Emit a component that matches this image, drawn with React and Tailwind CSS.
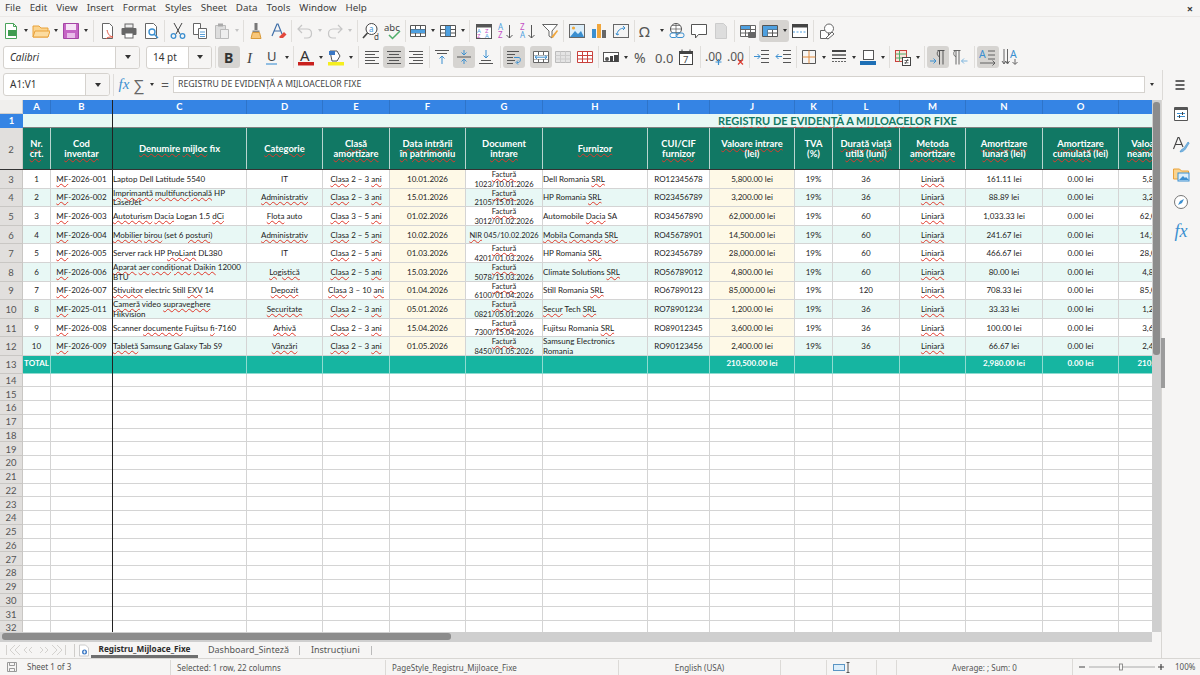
import { Fragment } from "react";

// *word* in a string = red spellcheck squiggle
const Spell = ({ text }) => {
  const parts = text.split("*");
  return (
    <>
      {parts.map((p, i) =>
        i % 2 ? (
          <span key={i} className="underline decoration-wavy decoration-[#e0392b] decoration-[0.5px] underline-offset-[0.5px]">
            {p}
          </span>
        ) : (
          <Fragment key={i}>{p}</Fragment>
        )
      )}
    </>
  );
};

const rows = [
  ["1", "*MF*-2026-001", "Laptop Dell Latitude 5540", "IT", "*Clasa* 2 – 3 *ani*", "10.01.2026", "*Factură* 1023/10.01.2026", "Dell Romania *SRL*", "RO12345678", "5,800.00 lei", "19%", "36", "161.11 lei"],
  ["2", "*MF*-2026-002", "*Imprimantă* *multifuncțională* HP *LaserJet*", "*Administrativ*", "*Clasa* 2 – 3 *ani*", "15.01.2026", "*Factură* 2105/15.01.2026", "HP Romania *SRL*", "RO23456789", "3,200.00 lei", "19%", "36", "88.89 lei"],
  ["3", "*MF*-2026-003", "*Autoturism* *Dacia* Logan 1.5 *dCi*", "*Flota* auto", "*Clasa* 3 – 5 *ani*", "01.02.2026", "*Factură* 3012/01.02.2026", "Automobile *Dacia* SA", "RO34567890", "62,000.00 lei", "19%", "60", "1,033.33 lei"],
  ["4", "*MF*-2026-004", "*Mobilier* *birou* (set 6 *posturi*)", "*Administrativ*", "*Clasa* 2 – 5 *ani*", "10.02.2026", "*NIR* 045/10.02.2026", "*Mobila* *Comanda* *SRL*", "RO45678901", "14,500.00 lei", "19%", "60", "241.67 lei"],
  ["5", "*MF*-2026-005", "Server rack HP *ProLiant* DL380", "IT", "*Clasa* 2 – 5 *ani*", "01.03.2026", "*Factură* 4201/01.03.2026", "HP Romania *SRL*", "RO23456789", "28,000.00 lei", "19%", "60", "466.67 lei"],
  ["6", "*MF*-2026-006", "*Aparat* *aer* *condiționat* *Daikin* 12000 BTU", "*Logistică*", "*Clasa* 2 – 5 *ani*", "15.03.2026", "*Factură* 5078/15.03.2026", "Climate Solutions *SRL*", "RO56789012", "4,800.00 lei", "19%", "60", "80.00 lei"],
  ["7", "*MF*-2026-007", "*Stivuitor* electric Still *EXV* 14", "*Depozit*", "*Clasa* 3 – 10 *ani*", "01.04.2026", "*Factură* 6100/01.04.2026", "Still Romania *SRL*", "RO67890123", "85,000.00 lei", "19%", "120", "708.33 lei"],
  ["8", "*MF*-2025-011", "*Cameră* video *supraveghere* *Hikvision*", "*Securitate*", "*Clasa* 2 – 3 *ani*", "05.01.2026", "*Factură* 0821/05.01.2026", "*Secur* Tech *SRL*", "RO78901234", "1,200.00 lei", "19%", "36", "33.33 lei"],
  ["9", "*MF*-2026-008", "Scanner *documente* Fujitsu *fi*-7160", "*Arhivă*", "*Clasa* 2 – 3 *ani*", "15.04.2026", "*Factură* 7300/15.04.2026", "Fujitsu Romania *SRL*", "RO89012345", "3,600.00 lei", "19%", "36", "100.00 lei"],
  ["10", "*MF*-2026-009", "*Tabletă* Samsung Galaxy Tab S9", "*Vânzări*", "*Clasa* 2 – 3 *ani*", "01.05.2026", "*Factură* 8450/01.05.2026", "Samsung Electronics Romania", "RO90123456", "2,400.00 lei", "19%", "36", "66.67 lei"],
];

const headers = [
  ["*Nr*.", "*crt*."], ["Cod", "*inventar*"], ["*Denumire* *mijloc* fix"], ["*Categorie*"], ["*Clasă*", "*amortizare*"],
  ["*Data* *intrării*", "*în* *patrimoniu*"], ["Document", "*intrare*"], ["*Furnizor*"], ["CUI/CIF", "*furnizor*"],
  ["*Valoare* *intrare*", "(lei)"], ["TVA", "(%)"], ["*Durată* *viață*", "*utilă* (*luni*)"], ["*Metoda*", "*amortizare*"],
  ["*Amortizare*", "*lunară* (lei)"], ["*Amortizare*", "*cumulată* (lei)"], ["*Valoare* *rămasă*", "*neamortizată* (lei)"],
];

const letters = ["A", "B", "C", "D", "E", "F", "G", "H", "I", "J", "K", "L", "M", "N", "O", "P"];

const I = ({ children }) => (
  <svg width="18" height="18" viewBox="0 0 18 18" fill="none" strokeWidth="1">
    {children}
  </svg>
);

const Lines = ({ items, color = "#555" }) => (
  <>
    {items.map(([a, b, y]) => (
      <path key={y} d={`M${a} ${y}H${b}`} stroke={color} />
    ))}
  </>
);

const Grid = ({ stroke = "#555", fill = "#fff" }) => (
  <path d="M1.5 3.5h15v11h-15zM1.5 7.5h15M1.5 11h15M6.5 3.5v11M11.5 3.5v11" stroke={stroke} fill={fill} />
);

const icons = {
  new: <I><path d="M3.5 1.5h8l3 3v12h-11z" fill="#fff" stroke="#4aa35a" /><rect x="6" y="8" width="8" height="6" fill="#3f9c50" /><path d="M11.5 1.5v3h3" stroke="#4aa35a" /></I>,
  open: <I><path d="M1 15V4h6l2 2h7v9z" fill="#fbd48e" stroke="#e9a23b" /><path d="M1 15l2-6h15l-2 6z" fill="#fcdca0" stroke="#e9a23b" /></I>,
  save: <I><path d="M1.5 1.5h15v15h-15z" fill="#c565c5" stroke="#a444a4" /><rect x="4" y="2" width="10" height="6" fill="#f6e3f6" /><rect x="5" y="11" width="8" height="5" fill="#e9bce9" /></I>,
  pdf: <I><path d="M4.5 1.5h7l3 3v12h-10z" fill="#fff" stroke="#666" /><path d="M9 8c1 4 2 6 6 7-3 0-6 0-7 2" stroke="#e0533f" /></I>,
  print: <I><rect x="5" y="2" width="8" height="4" fill="#eee" stroke="#666" /><rect x="1.5" y="6" width="15" height="7" rx="1" fill="#666" /><rect x="5" y="11" width="8" height="5" fill="#fff" stroke="#666" /></I>,
  preview: <I><path d="M3.5 1.5h8l3 3v12h-11z" fill="#fff" stroke="#666" /><circle cx="10" cy="10" r="3" stroke="#3b8fd0" strokeWidth="1.4" /><path d="M12 12l4 4" stroke="#3b8fd0" strokeWidth="1.5" /></I>,
  cut: <I><path d="M5 1l6 11M13 1L7 12" stroke="#444" /><circle cx="4.5" cy="14" r="2.3" stroke="#3b8fd0" strokeWidth="1.3" /><circle cx="13.5" cy="14" r="2.3" stroke="#3b8fd0" strokeWidth="1.3" /></I>,
  copy: <I><path d="M2.5 1.5h7v11h-7z" fill="#fff" stroke="#666" /><path d="M7.5 6.5h8v10h-8z" fill="#fff" stroke="#666" /><Lines items={[[9, 14, 10], [9, 14, 12.5], [9, 14, 14.5]]} color="#5aa0d8" /></I>,
  paste: <I><path d="M2.5 3.5h10v13h-10z" fill="#ddd" stroke="#bbb" /><path d="M7.5 7.5h8v9h-8z" fill="#eee" stroke="#bbb" /><rect x="5" y="1.5" width="5" height="3" fill="#aaa" /></I>,
  clone: <I><rect x="7.5" y="1" width="3" height="7" fill="#777" /><path d="M5.5 8.5h7v2h-7z" fill="#888" /><path d="M4 16.5l1.5-6h7l1.5 6z" fill="#f8c77a" stroke="#d99a3a" /></I>,
  clear: <I><path d="M3 14L8 2h1l4 10M5 9h6" stroke="#3f6fa8" strokeWidth="1.2" /><path d="M10 15l5-5 2.5 2.5-3.5 3.5h-3z" fill="#e2483d" /></I>,
  undo: <I><path d="M6 3L2 7l4 4M2 7h9c6 0 6 9 0 9H8" stroke="#c6c6c6" strokeWidth="1.2" /></I>,
  redo: <I><path d="M12 3l4 4-4 4M16 7H7c-6 0-6 9 0 9h3" stroke="#c6c6c6" strokeWidth="1.2" /></I>,
  find: <I><circle cx="9.5" cy="7" r="5.5" fill="#fff" stroke="#444" /><path d="M5.5 11L1 16" stroke="#444" strokeWidth="1.6" /><text x="7" y="9.5" fontSize="8" fill="#3b8fd0">a</text><text x="12" y="17.5" fontSize="8" fill="#444">d</text></I>,
  spell: <I><text x="0" y="9" fontSize="9.5" fill="#444">abc</text><path d="M5 13l3.5 3.5L16 9" stroke="#4fae6a" strokeWidth="1.5" /></I>,
  row: <I><Grid stroke="#555" fill="#fff" /><rect x="2" y="7.5" width="14" height="3.5" fill="#4ea0e0" /></I>,
  col: <I><Grid stroke="#555" fill="#fff" /><rect x="6.5" y="4" width="5" height="10" fill="#4ea0e0" /></I>,
  sort: <I><rect x="1.5" y="2.5" width="15" height="14" fill="#fff" stroke="#555" /><rect x="1.5" y="2.5" width="15" height="3" fill="#555" /><text x="2" y="11" fontSize="6" fill="#4ea0e0">A</text><text x="2" y="16" fontSize="6" fill="#c44fc4">Z</text><text x="10" y="11" fontSize="6" fill="#c44fc4">Z</text><text x="10" y="16" fontSize="6" fill="#4ea0e0">A</text></I>,
  asc: <I><text x="1" y="8" fontSize="8" fill="#4ea0e0">A</text><text x="1" y="16" fontSize="8" fill="#c44fc4">Z</text><path d="M12.5 3v13M9.5 13l3 3 3-3" stroke="#555" /></I>,
  desc: <I><text x="1" y="8" fontSize="8" fill="#c44fc4">Z</text><text x="1" y="16" fontSize="8" fill="#4ea0e0">A</text><path d="M12.5 3v13M9.5 13l3 3 3-3" stroke="#555" /></I>,
  filter: <I><path d="M1.5 2.5h15L11 9v7l-3-2V9z" fill="#fff" stroke="#666" /><path d="M10 15l6-7 1 1-5 7z" fill="#f0a63c" /></I>,
  image: <I><rect x="1.5" y="2.5" width="15" height="13" fill="#dceefa" stroke="#666" /><circle cx="5.5" cy="6" r="1.6" fill="#f2a93b" /><path d="M2 15l5-6 3 3 3-3 3 6z" fill="#3b8fd0" /></I>,
  chart: <I><rect x="2" y="7" width="4" height="9" fill="#3b8fd0" /><rect x="7" y="2" width="4" height="14" fill="#f0a63c" /><rect x="12" y="8" width="4" height="8" fill="#666" /></I>,
  pivot: <I><rect x="1.5" y="2.5" width="15" height="13" fill="#f4f4f4" stroke="#666" /><path d="M5 13c0-4 3-7 8-7M11 4l2 2-2 2M4 11l1 2 2-1" stroke="#3b8fd0" /></I>,
  omega: <I><text x="1" y="15" fontSize="15" fill="#555">Ω</text></I>,
  link: <I><circle cx="8" cy="7" r="5.5" fill="#fff" stroke="#555" /><path d="M2.5 7h11M8 1.5v11M4 3.5h8M4 10.5h8" stroke="#555" strokeWidth="0.7" /><rect x="2" y="11" width="7" height="4.5" rx="2" stroke="#3b8fd0" fill="#fff" /><rect x="8" y="11" width="8" height="4.5" rx="2" stroke="#3b8fd0" /></I>,
  comment: <I><path d="M1.5 2.5h15v10h-8l-3 3.5v-3.5h-4z" fill="#fff" stroke="#555" /></I>,
  note: <I><path d="M3.5 1.5h8l3 3v12h-11z" fill="#ddd" stroke="#ccc" /></I>,
  printrange: <I><Grid stroke="#666" /><rect x="2" y="4" width="9" height="3" fill="#4ea0e0" /><rect x="9" y="10" width="8" height="6" rx="1" fill="#666" /></I>,
  freeze: <I><Grid stroke="#555" /><rect x="2" y="4" width="14" height="3.5" fill="#4ea0e0" /><rect x="2" y="4" width="4.5" height="10" fill="#4ea0e0" /></I>,
  split: <I><rect x="1.5" y="2.5" width="15" height="13" fill="#fff" stroke="#444" /><rect x="1.5" y="2.5" width="15" height="3" fill="#444" /><path d="M2 10h14" stroke="#4ea0e0" strokeDasharray="2 1.5" /></I>,
  shapes: <I><path d="M2.5 8.5h8v8h-8z" fill="#fff" stroke="#666" /><circle cx="11" cy="6.5" r="4.5" fill="#fff" stroke="#666" /><path d="M8 16l6-6 2 2-6 5z" fill="#fff" stroke="#666" /></I>,
  bold: <svg width="18" height="18" viewBox="0 0 18 18"><text x="4" y="15" fontSize="14" fontWeight="700" fill="#333">B</text></svg>,
  italic: <svg width="18" height="18" viewBox="0 0 18 18"><text x="5" y="15" fontSize="15" fontStyle="italic" fontFamily="Liberation Serif" fill="#444">I</text></svg>,
  under: <I><text x="4" y="13" fontSize="13" fill="#444">U</text><path d="M3 16h11" stroke="#5aa0d8" strokeWidth="1.3" /></I>,
  color: <I><text x="3" y="12.5" fontSize="15" fill="#333">A</text><rect x="1" y="14" width="16" height="3.5" fill="#c9211e" /></I>,
  bg: <I><path d="M3 3h7l3 5-3 5H5z" fill="#fff" stroke="#555" /><path d="M2 3h6v4H2z" fill="#3b78c4" /><rect x="1" y="14" width="16" height="3.5" fill="#f5ee1f" /></I>,
  left: <I><Lines items={[[2, 16, 3.5], [2, 12, 6.5], [2, 16, 9.5], [2, 12, 12.5], [2, 16, 15.5]]} /></I>,
  center: <I><Lines items={[[2, 16, 3.5], [4, 14, 6.5], [2, 16, 9.5], [4, 14, 12.5], [2, 16, 15.5]]} /></I>,
  right: <I><Lines items={[[2, 16, 3.5], [6, 16, 6.5], [2, 16, 9.5], [6, 16, 12.5], [2, 16, 15.5]]} /></I>,
  top: <I><Lines items={[[2, 16, 2.5], [4, 14, 5.5]]} /><path d="M9 16V8M6.5 10.5L9 8l2.5 2.5" stroke="#3b8fd0" /></I>,
  middle: <I><Lines items={[[2, 16, 9]]} /><path d="M9 2v5M6.5 4.5L9 7l2.5-2.5M9 16v-5M6.5 13.5L9 11l2.5 2.5" stroke="#3b8fd0" /></I>,
  bottom: <I><Lines items={[[4, 14, 12.5], [2, 16, 15.5]]} /><path d="M9 2v8M6.5 7.5L9 10l2.5-2.5" stroke="#3b8fd0" /></I>,
  wrap: <I><Lines items={[[2, 14, 3.5], [2, 10, 6.5], [2, 8, 9.5], [2, 10, 12.5], [2, 8, 15.5]]} /><path d="M9 9.5h5c2 0 2 5-1 5h-1M13 12.5l-2 2 2 2" stroke="#3b8fd0" /></I>,
  merge: <I><Grid stroke="#666" /><rect x="2" y="7.5" width="14" height="3.5" fill="#fff" /><path d="M3 9.2h12M5 7.5L3 9.2 5 11M13 7.5l2 1.7-2 1.7" stroke="#3b8fd0" /></I>,
  merge2: <I><path d="M1.5 3.5h15v11h-15z" fill="#e4e4e4" stroke="#bbb" /><path d="M1.5 7.5h15M1.5 11h15M6.5 3.5v11M11.5 3.5v11" stroke="#ccc" /></I>,
  unmerge: <I><Grid stroke="#c9413c" /></I>,
  number: <I><rect x="1.5" y="4.5" width="15" height="9" fill="#fff" stroke="#555" /><rect x="8" y="8" width="3" height="6" fill="#444" /><rect x="12" y="7" width="4" height="7" fill="#444" /><circle cx="5" cy="11" r="2" fill="#555" /></I>,
  percent: <svg width="18" height="18" viewBox="0 0 18 18"><text x="1" y="15" fontSize="14" fill="#555">%</text></svg>,
  zero: <svg width="18" height="18" viewBox="0 0 18 18"><text x="0" y="14.5" fontSize="13" fill="#555">0.0</text></svg>,
  date: <I><rect x="2.5" y="3.5" width="13" height="13" fill="#fff" stroke="#444" /><path d="M2.5 5h13" stroke="#444" strokeWidth="2" /><path d="M5 1.5v3M13 1.5v3" stroke="#444" /><text x="6" y="15" fontSize="9.5" fill="#444">7</text></I>,
  addDec: <I><text x="0" y="13" fontSize="12" fill="#555">.00</text><path d="M13.5 11v6M10.5 14h6" stroke="#3b8fd0" strokeWidth="1.2" /></I>,
  delDec: <I><text x="0" y="13" fontSize="12" fill="#555">.00</text><path d="M11 11.5l5 5M16 11.5l-5 5" stroke="#dd3b30" strokeWidth="1.2" /></I>,
  indent: <I><Lines items={[[8, 16, 2.5], [8, 16, 6.5], [8, 16, 10.5], [8, 16, 14.5]]} /><path d="M1 8.5h6M4.5 6l2.5 2.5L4.5 11" stroke="#3b8fd0" /></I>,
  outdent: <I><Lines items={[[8, 16, 2.5], [8, 16, 6.5], [8, 16, 10.5], [8, 16, 14.5]]} /><path d="M7 8.5H1M3.5 6L1 8.5 3.5 11" stroke="#3b8fd0" /></I>,
  borders: <I><path d="M2.5 2.5h13v13h-13z" stroke="#555" /><path d="M9 2.5v13M2.5 9h13" stroke="#e08a3c" /></I>,
  lineStyle: <I><path d="M2 3h14" stroke="#444" strokeWidth="2" /><path d="M2 7h14" stroke="#444" strokeWidth="1.4" /><path d="M2 10.5h14" stroke="#444" /><path d="M2 13.5h14" stroke="#666" strokeDasharray="2 1" /></I>,
  borderColor: <I><rect x="4.5" y="2.5" width="10" height="9" fill="#fff" stroke="#555" /><rect x="1" y="13" width="16" height="4" fill="#1e6fb5" /></I>,
  cond: <I><rect x="1.5" y="2.5" width="11" height="11" fill="#fbe3dc" stroke="#c9413c" /><path d="M1.5 6h11M1.5 10h11M5.5 2.5v11" stroke="#4fae6a" /><rect x="8.5" y="9.5" width="8" height="8" fill="#fff" stroke="#444" /><path d="M10.5 12.5h4M10.5 14.8h4M14 11l-3 5" stroke="#444" strokeWidth="0.8" /></I>,
  ltr: <I><path d="M8.5 2.5h7M10.5 2.5v14M14 2.5v14M10.5 2.5c-3 0-3 6 0 6" stroke="#555" /><path d="M1 13h6M4.5 10.5L7 13l-2.5 2.5" stroke="#3b8fd0" /></I>,
  rtl: <I><path d="M2.5 2.5h7M5 2.5v14M8 2.5v14M5 2.5c-3 0-3 6 0 6" stroke="#666" /><path d="M16.5 13h-6M13 10.5L10.5 13l2.5 2.5" stroke="#7fb6de" /></I>,
  textLtr: <I><text x="0" y="10" fontSize="10.5" fill="#3b8fd0">A</text><path d="M9 3h7M9 7h7M9 11h7M1 15h15M13.5 12.5L16 15l-2.5 2.5" stroke="#555" strokeWidth="0.9" /></I>,
  textTtb: <I><text x="9" y="10" fontSize="10.5" fill="#3b8fd0">A</text><path d="M3 1v14M6.5 1v14M1 13l2 3 2-3M4.5 13l2 3 2-3M14 11v5M11.5 14l2.5 2.5L16.5 14" stroke="#555" strokeWidth="0.9" /></I>,
};

const Btn = ({ icon, active, className = "" }) => (
  <div className={`w-[22px] h-[22px] shrink-0 flex items-center justify-center rounded-[3px] ${active ? "bg-[#d6d4d1]" : ""} ${className}`}>
    {icons[icon]}
  </div>
);

const Arrow = ({ light }) => (
  <div className="w-[8px] h-[22px] shrink-0 flex items-center justify-center">
    <div className={`w-0 h-0 border-l-[2.5px] border-r-[2.5px] border-t-[3px] border-l-transparent border-r-transparent ${light ? "border-t-[#c4c4c4]" : "border-t-[#333]"}`} />
  </div>
);

const Sep = ({ className }) => (
  <div className={`h-[22px] shrink-0 flex justify-center ${className}`}>
    <div className="w-px h-full bg-[#e0dedb]" />
  </div>
);

const Combo = ({ text, italic, className, split }) => (
  <div className={`h-[23px] shrink-0 flex rounded-[3px] border border-[#d5d2ce] bg-white overflow-hidden ${className}`}>
    <div className={`flex-1 pl-[6px] text-[10px] leading-[21px] text-[#333] ${italic ? "italic" : ""}`}>{text}</div>
    <div className={`${split} bg-[#f6f5f4] border-l border-[#d5d2ce] flex items-center justify-center`}>
      <div className="w-0 h-0 border-l-[3.5px] border-r-[3.5px] border-t-[4px] border-l-transparent border-r-transparent border-t-[#333]" />
    </div>
  </div>
);

const menu = ["File", "Edit", "View", "Insert", "Format", "Styles", "Sheet", "Data", "Tools", "Window", "Help"];

export default function App() {
  const cellBase = "border-r border-b border-[#d4d4d4] overflow-hidden flex items-center pt-[1.5px]";
  const rowHead = "bg-[#e1dfdd] border-r border-b border-[#c9c7c4] flex items-center justify-center text-[9.5px] text-[#555] pt-[1.5px]";
  return (
    <div className="w-[1200px] h-[675px] overflow-hidden flex flex-col bg-[#f6f5f4] text-[#333] font-['Noto_Sans',sans-serif]">
      {/* Menu */}
      <div className="h-[17px] shrink-0 flex items-center pl-[5px] gap-[9px] text-[9.8px] text-[#3d3d3d] border-b border-[#ebe9e7]">
        {menu.map((m) => (
          <span key={m}>{m}</span>
        ))}
        <span className="ml-auto mr-[7px] text-[11px] font-bold leading-none">×</span>
      </div>

      {/* Standard toolbar */}
      <div className="h-[27px] shrink-0 flex items-center">
        <Btn icon="new" /><Arrow />
        <Btn icon="open" /><Arrow />
        <Btn icon="save" /><Arrow />
        <Sep className="w-[6px]" />
        <Btn icon="pdf" /><Btn icon="print" /><Btn icon="preview" />
        <Sep className="w-[5px]" />
        <Btn icon="cut" /><Btn icon="copy" /><Btn icon="paste" /><Arrow light />
        <Sep className="w-[4px]" />
        <Btn icon="clone" /><Btn icon="clear" />
        <Sep className="w-[5px]" />
        <Btn icon="undo" /><Arrow light /><Btn icon="redo" /><Arrow light />
        <Sep className="w-[6px]" />
        <Btn icon="find" /><Btn icon="spell" />
        <Sep className="w-[3px]" />
        <Btn icon="row" /><Arrow /><Btn icon="col" /><Arrow />
        <Sep className="w-[5px]" />
        <Btn icon="sort" className="ml-px" /><Btn icon="asc" /><Btn icon="desc" /><Btn icon="filter" />
        <Sep className="w-[5px]" />
        <Btn icon="image" /><Btn icon="chart" /><Btn icon="pivot" />
        <Sep className="w-[4px]" />
        <Btn icon="omega" /><Arrow /><Btn icon="link" /><Btn icon="comment" /><Btn icon="note" />
        <Sep className="w-[5px]" />
        <Btn icon="printrange" />
        <div className="flex rounded-[3px] bg-[#d6d4d1]"><Btn icon="freeze" /><Arrow /></div>
        <Btn icon="split" />
        <Sep className="w-[5px]" />
        <Btn icon="shapes" />
      </div>

      {/* Formatting toolbar */}
      <div className="h-[26px] shrink-0 flex items-center pl-[3px]">
        <Combo text="Calibri" italic className="w-[137px]" split="w-[24px]" />
        <Combo text="14 pt" className="w-[66px] ml-[6px]" split="w-[23px]" />
        <Sep className="w-[6px]" />
        <Btn icon="bold" active /><Btn icon="italic" /><Btn icon="under" className="-ml-px" /><Arrow />
        <Sep className="w-[4px]" />
        <Btn icon="color" /><Arrow /><Btn icon="bg" /><Arrow />
        <Sep className="w-[6px]" />
        <Btn icon="left" /><Btn icon="center" active /><Btn icon="right" />
        <Sep className="w-[4px]" />
        <Btn icon="top" /><Btn icon="middle" active /><Btn icon="bottom" />
        <Sep className="w-[6px]" />
        <Btn icon="wrap" active /><Btn icon="merge" active className="ml-[5px]" /><Btn icon="merge2" /><Btn icon="unmerge" />
        <Sep className="w-[4px]" />
        <Btn icon="number" /><Arrow /><Btn icon="percent" className="ml-px" /><Btn icon="zero" /><Btn icon="date" />
        <Sep className="w-[6px]" />
        <Btn icon="addDec" /><Btn icon="delDec" />
        <Sep className="w-[4px]" />
        <Btn icon="indent" /><Btn icon="outdent" />
        <Sep className="w-[3px]" />
        <Btn icon="borders" /><Arrow /><Btn icon="lineStyle" /><Arrow /><Btn icon="borderColor" className="-ml-px" /><Arrow />
        <Sep className="w-[5px]" />
        <Btn icon="cond" /><Arrow />
        <Sep className="w-[5px]" />
        <Btn icon="ltr" active /><Btn icon="rtl" />
        <Sep className="w-[6px]" />
        <Btn icon="textLtr" active /><Btn icon="textTtb" />
      </div>

      {/* Formula bar */}
      <div className="h-[30px] shrink-0 flex items-center pl-[3px] pb-px border-r border-[#dcdad7] w-[1163px]">
        <Combo text="A1:V1" className="w-[107px]" split="w-[24px]" />
        <div className="w-px h-[22px] bg-[#dfdddb] ml-[3px]" />
        <span className="ml-[3px] w-[14px] text-center text-[15px] italic text-[#3b8fd0] font-['Liberation_Serif',serif]">fx</span>
        <span className="ml-px w-[14px] text-center text-[16px] text-[#666] leading-none">∑</span>
        <div className="ml-[2px]"><Arrow /></div>
        <span className="ml-[2px] w-[14px] text-center text-[14px] text-[#555] leading-none">=</span>
        <div className="w-[972px] ml-px h-[17px] bg-white border border-[#d5d2ce] pl-[4px] text-[8.7px] leading-[15px] text-[#444] shrink-0">
          REGISTRU DE EVIDENȚĂ A MIJLOACELOR FIXE
        </div>
        <div className="ml-[3px]"><Arrow /></div>
      </div>

      {/* Sheet + sidebar */}
      <div className="flex-1 min-h-0 flex">
        <div className="w-[1162px] shrink-0 flex flex-col border-r border-[#d8d6d3]">
          <div className="h-[532px] flex shrink-0">
            <div className="w-[1152px] h-full overflow-hidden relative">
              <div className="grid w-[1208px] grid-cols-[23px_28px_62px_134px_76px_67px_76px_77px_105px_62px_85px_38px_67px_66px_77px_76px_89px] grid-rows-[14px_14px_42px_repeat(10,18.6px)_17.6px_repeat(19,13.76px)] font-['Lato',sans-serif] text-[8px] leading-[9.5px] text-[#222]">
                {/* column headers */}
                <div className="bg-[#f0efed] border-r border-b border-[#cfcfcf]" />
                {letters.map((l) => (
                  <div key={l} className="bg-[#3584e4] border-r border-[#2e74c9] text-white font-bold text-[9.5px] flex items-center justify-center">
                    {l}
                  </div>
                ))}

                {/* row 1: merged title */}
                <div className="bg-[#3584e4] text-white font-bold text-[9.5px] flex items-center justify-center">1</div>
                <div className="col-span-16 bg-[#e8f8f5] border-b border-[#808080] pl-[695px] text-[11px] leading-[13px] font-bold text-[#117864] whitespace-nowrap">
                  <Spell text="*REGISTRU* DE *EVIDENȚĂ* A *MIJLOACELOR* FIXE" />
                </div>

                {/* row 2: table header */}
                <div className={rowHead}>2</div>
                {headers.map((h, i) => (
                  <div key={i} className="bg-[#117864] border-r border-[#b8d5cf] flex flex-col items-center justify-center text-center text-white font-bold text-[9.4px] leading-[10.5px] whitespace-nowrap">
                    {h.map((line, j) => (
                      <div key={j}><Spell text={line} /></div>
                    ))}
                  </div>
                ))}

                {/* data rows */}
                {rows.map((r, i) => {
                  const bg = i % 2 ? "bg-[#e8f8f5]" : "bg-white";
                  return (
                    <Fragment key={i}>
                      <div className={rowHead}>{i + 3}</div>
                      <div className={`${cellBase} ${bg} justify-center`}>{r[0]}</div>
                      <div className={`${cellBase} ${bg} justify-center whitespace-nowrap`}><span><Spell text={r[1]} /></span></div>
                      <div className={`${cellBase} ${bg} pr-[3px]`}><span><Spell text={r[2]} /></span></div>
                      <div className={`${cellBase} ${bg} justify-center whitespace-nowrap`}><span><Spell text={r[3]} /></span></div>
                      <div className={`${cellBase} ${bg} justify-center whitespace-nowrap`}><span><Spell text={r[4]} /></span></div>
                      <div className={`${cellBase} bg-[#fef9e7] justify-center`}>{r[5]}</div>
                      <div className={`${cellBase} ${bg} justify-center text-center text-[7.5px]`}><span><Spell text={r[6]} /></span></div>
                      <div className={`${cellBase} ${bg}`}><span><Spell text={r[7]} /></span></div>
                      <div className={`${cellBase} ${bg} justify-center`}>{r[8]}</div>
                      <div className={`${cellBase} bg-[#fef9e7] justify-center`}>{r[9]}</div>
                      <div className={`${cellBase} ${bg} justify-center`}>{r[10]}</div>
                      <div className={`${cellBase} ${bg} justify-center`}>{r[11]}</div>
                      <div className={`${cellBase} ${bg} justify-center`}><span><Spell text="*Liniară*" /></span></div>
                      <div className={`${cellBase} ${bg} justify-center`}>{r[12]}</div>
                      <div className={`${cellBase} ${bg} justify-center`}>0.00 lei</div>
                      <div className={`${cellBase} ${bg} justify-center`}>{r[9]}</div>
                    </Fragment>
                  );
                })}

                {/* totals */}
                <div className={rowHead}>13</div>
                {["TOTAL", "", "", "", "", "", "", "", "", "210,500.00 lei", "", "", "", "2,980.00 lei", "0.00 lei", "210,500.00 lei"].map((t, i) => (
                  <div key={i} className="bg-[#16b5a1] border-r border-b border-[#8fdbd0] text-white font-bold flex items-center justify-center whitespace-nowrap overflow-hidden">
                    {t}
                  </div>
                ))}

                {/* empty rows */}
                {Array.from({ length: 19 }, (_, i) => (
                  <Fragment key={i}>
                    <div className={rowHead}>{i + 14}</div>
                    {letters.map((l) => (
                      <div key={l} className="bg-white border-r border-b border-[#d4d4d4]" />
                    ))}
                  </Fragment>
                ))}
              </div>
              {/* freeze lines */}
              <div className="absolute left-[112px] top-0 bottom-0 w-px bg-[#222]" />
              <div className="absolute left-0 right-0 top-[69px] h-px bg-[#333]" />
            </div>
            {/* vertical scrollbar */}
            <div className="w-[9px] h-full bg-[#cfcfcf] relative">
              <div className="absolute left-[1px] right-[1px] top-[2px] h-[253px] rounded-[3px] bg-[#8c8c8c]" />
              <div className="absolute left-[9px] top-[238px] w-[4px] h-[50px] bg-[#9c9c9c]" />
            </div>
          </div>
          {/* horizontal scrollbar */}
          <div className="h-[10px] shrink-0 bg-[#cfcfcf] w-[1152px] pl-[2px] pt-[1px]">
            <div className="w-[449px] h-[7px] rounded-[3px] bg-[#8c8c8c]" />
          </div>

          {/* sheet tabs */}
          <div className="h-[16px] shrink-0 flex items-center text-[9px] text-[#555]">
            <div className="w-[74px] pl-[6px] shrink-0">
              <svg width="60" height="12" viewBox="0 0 60 12" fill="none" stroke="#d4d2cf">
                <path d="M0.5 1v10M9 1L4 6l5 5M14 1L9 6l5 5M21 3l-3 3 3 3M26 3l-3 3 3 3M34 3l3 3-3 3M39 3l3 3-3 3M46 1l5 5-5 5M51 1l5 5-5 5M59.5 1v10" />
              </svg>
            </div>
            <div className="w-px h-[13px] bg-[#cfcdca]" />
            <div className="ml-[3px] w-[12px] h-[14px] flex items-center justify-center">
              <svg width="12" height="13" viewBox="0 0 12 13"><path d="M1.5 1h6l3 3v8h-9z" fill="#fff" stroke="#ccc" /><circle cx="6.5" cy="8" r="2.5" fill="#3b78c4" /><path d="M5 8h3M6.5 6.5v3" stroke="#fff" strokeWidth="0.8" /></svg>
            </div>
            <div className="ml-[1px] w-[107px] h-full border-b-[3px] border-[#6f6f6f] text-center font-bold text-[8.2px] leading-[14px] text-[#2b2b2b] whitespace-nowrap">Registru_Mijloace_Fixe</div>
            <div className="ml-[10px] whitespace-nowrap">Dashboard_Sinteză</div>
            <div className="ml-[10px] w-px h-[9px] bg-[#bbb]" />
            <div className="ml-[11px] whitespace-nowrap">Instrucțiuni</div>
            <div className="ml-[11px] w-px h-[9px] bg-[#bbb]" />
          </div>
        </div>

        {/* sidebar */}
        <div className="flex-1 flex flex-col items-center relative">
          <svg className="absolute left-[11px] -top-[22px]" width="14" height="14" viewBox="0 0 14 14"><path d="M2.5 3h9M2.5 7h9M2.5 11h9" stroke="#333" strokeWidth="1.4" /></svg>
          <div className="mt-[6px]">
            <svg width="16" height="16" viewBox="0 0 16 16"><path d="M1.5 1.5h13v13h-13z" fill="#fff" stroke="#555" /><path d="M1.5 3h13" stroke="#555" strokeWidth="2" /><path d="M4 7.5h8M4 10.5h8" stroke="#3b8fd0" /><path d="M9.5 6v3M6.5 9v3" stroke="#444" /></svg>
          </div>
          <div className="mt-[14px]">
            <svg width="18" height="18" viewBox="0 0 18 18" fill="none"><path d="M1.5 13L6 1.5h1L11 11M3.5 8.5h6" stroke="#444" strokeWidth="1.1" /><path d="M8 16c1-3 3-3 4-4l4-6 1.2 1-3.7 6c-1 1.5-3 3-5.500 3z" fill="#7fb6de" stroke="#3b8fd0" strokeWidth="0.6" /></svg>
          </div>
          <div className="mt-[11px]">
            <svg width="18" height="18" viewBox="0 0 18 18"><path d="M1.5 14V4h6l2 2h7v8z" fill="#fbd48e" stroke="#e9a23b" /><rect x="6" y="8" width="11" height="8" fill="#dceefa" stroke="#3b8fd0" /><path d="M7 15l4-4 2 2 1-1 3 3z" fill="#3b8fd0" /></svg>
          </div>
          <div className="mt-[11px]">
            <svg width="16" height="16" viewBox="0 0 16 16"><circle cx="8" cy="8" r="6.5" fill="#fff" stroke="#777" /><path d="M11 5L9 9 5 11l2-4z" fill="#3b8fd0" /></svg>
          </div>
          <div className="mt-[11px] text-[18px] italic text-[#3b8fd0] font-['Liberation_Serif',serif] leading-[20px]">fx</div>
        </div>
      </div>

      {/* Status bar */}
      <div className="h-[17px] shrink-0 flex items-center border-t border-[#d8d6d3] text-[8px] text-[#555] whitespace-nowrap">
        <div className="w-[27px] pl-[6px] shrink-0">
          <svg width="12" height="12" viewBox="0 0 12 12"><path d="M1.5 1.5h9v9h-9z" stroke="#999" fill="none" /><path d="M3.5 1.5v3h5v-3M3.5 10.5v-3h5v3" stroke="#999" fill="none" /></svg>
        </div>
        <div className="w-[143px] shrink-0">Sheet 1 of 3</div>
        <div className="w-[215px] shrink-0 border-l border-[#dcdad7] pl-[6px] leading-[15px]">Selected: 1 row, 22 columns</div>
        <div className="w-[233px] shrink-0 border-l border-[#dcdad7] pl-[6px] leading-[15px]">PageStyle_Registru_Mijloace_Fixe</div>
        <div className="w-[162px] shrink-0 border-l border-[#dcdad7] text-center leading-[15px]">English (USA)</div>
        <div className="w-[46px] h-[15px] shrink-0 border-l border-[#dcdad7]" />
        <div className="w-[50px] h-[15px] shrink-0 border-l border-[#dcdad7] pl-[6px] flex items-center">
          <svg width="18" height="11" viewBox="0 0 18 11"><rect x="0.5" y="2.5" width="11" height="6" fill="#dceefa" stroke="#5a95c4" /><path d="M15 0.5v10M13.5 0.5h3M13.5 10.5h3" stroke="#555" /></svg>
        </div>
        <div className="w-[20px] h-[15px] shrink-0 border-l border-[#dcdad7]" />
        <div className="w-[176px] shrink-0 border-l border-[#dcdad7] text-center leading-[15px]">Average: ; Sum: 0</div>
        <div className="flex-1 h-full border-l border-[#dcdad7] pl-[6px] flex items-center">
          <svg width="85" height="12" viewBox="0 0 85 12"><path d="M0 6h6M79 6h6M82 3v6" stroke="#444" strokeWidth="1.2" /><path d="M10 6h66" stroke="#aaa" /><rect x="40.5" y="3" width="3" height="6" fill="#f6f5f4" stroke="#777" strokeWidth="0.8" /></svg>
          <span className="ml-[11px]">100%</span>
        </div>
      </div>
    </div>
  );
}
